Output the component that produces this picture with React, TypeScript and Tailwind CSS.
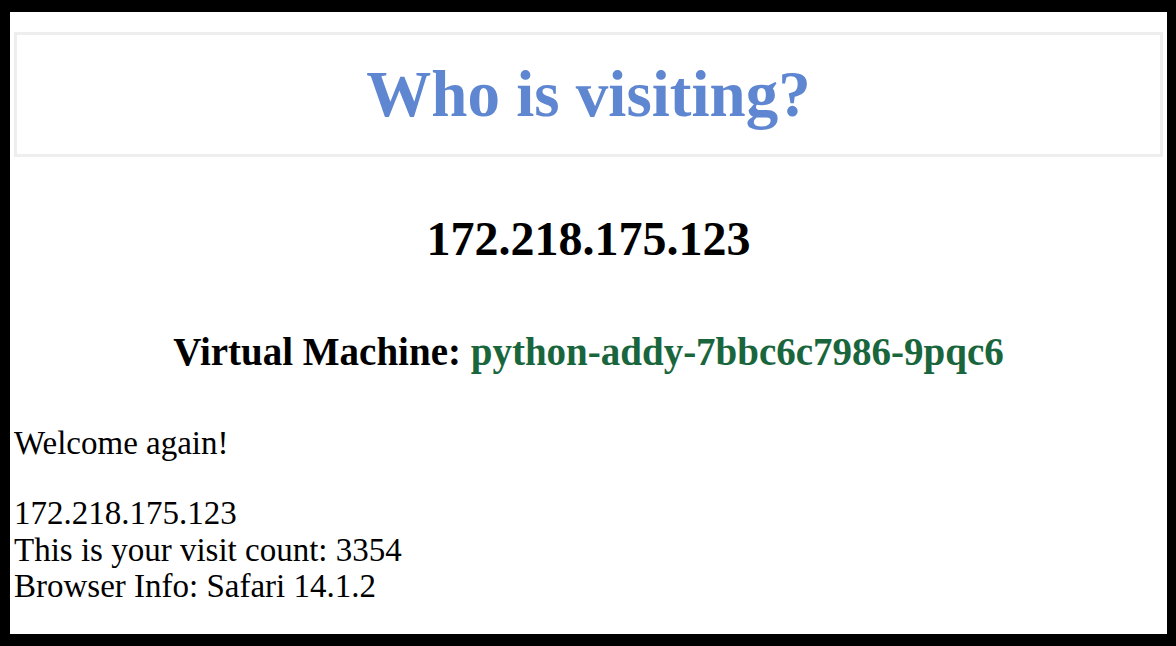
export default function App() {
  return (
    <div className="h-[646px] w-[1176px] bg-black pt-[12px] pb-[12px] pl-[10px] pr-[9px]">
      <div
        className="h-full bg-white px-[4px] pt-[20px] text-black"
        style={{ fontFamily: '"Liberation Serif", "Times New Roman", serif' }}
      >
        <div className="flex h-[125px] items-center justify-center border-[3px] border-[#eeeeee]">
          <h1 className="text-[65px] font-bold leading-[75px] text-[#5f86d0]">Who is visiting?</h1>
        </div>

        <h2 className="mt-[54px] text-center text-[48px] font-bold leading-[55px]">172.218.175.123</h2>

        <h3 className="mt-[63px] text-center text-[39px] font-bold leading-[45px]">
          Virtual Machine: <span className="text-[#19663d]">python-addy-7bbc6c7986-9pqc6</span>
        </h3>

        <p className="mt-[51px] text-[33px] leading-[36.5px]">Welcome again!</p>

        <p className="mt-[33.5px] text-[33px] leading-[36.5px]">
          172.218.175.123
          <br />
          This is your visit count: 3354
          <br />
          Browser Info: Safari 14.1.2
        </p>
      </div>
    </div>
  );
}
